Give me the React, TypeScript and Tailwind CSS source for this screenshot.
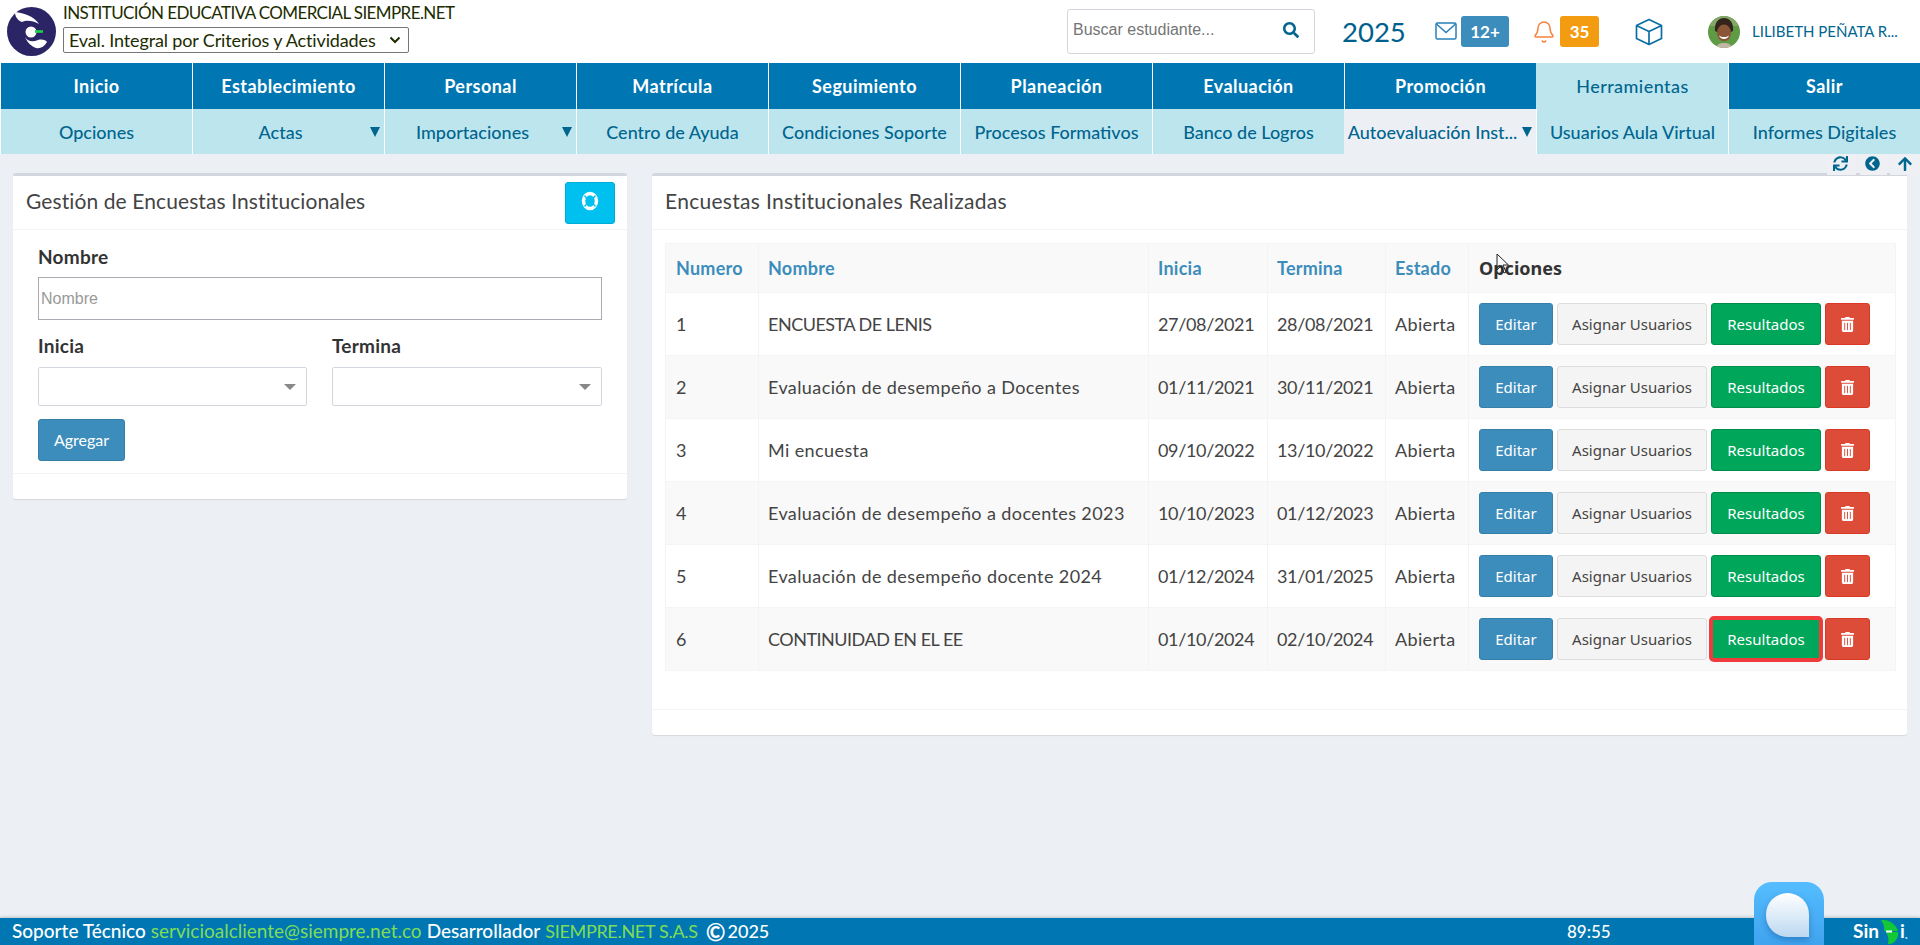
import { FaTrashAlt, FaSearch, FaSync, FaChevronCircleLeft, FaArrowUp } from 'react-icons/fa'
import { Bell } from 'lucide-react'

const topMenu = ['Inicio', 'Establecimiento', 'Personal', 'Matrícula', 'Seguimiento', 'Planeación', 'Evaluación', 'Promoción', 'Herramientas', 'Salir']
const subMenu = [
  { label: 'Opciones' },
  { label: 'Actas', arrow: true },
  { label: 'Importaciones', arrow: true },
  { label: 'Centro de Ayuda' },
  { label: 'Condiciones Soporte' },
  { label: 'Procesos Formativos' },
  { label: 'Banco de Logros' },
  { label: 'Autoevaluación Inst...', arrow: true, active: true },
  { label: 'Usuarios Aula Virtual' },
  { label: 'Informes Digitales' },
]
const encuestas = [
  { n: 1, nombre: 'ENCUESTA DE LENIS', inicia: '27/08/2021', termina: '28/08/2021', caps: true },
  { n: 2, nombre: 'Evaluación de desempeño a Docentes', inicia: '01/11/2021', termina: '30/11/2021' },
  { n: 3, nombre: 'Mi encuesta', inicia: '09/10/2022', termina: '13/10/2022' },
  { n: 4, nombre: 'Evaluación de desempeño a docentes 2023', inicia: '10/10/2023', termina: '01/12/2023' },
  { n: 5, nombre: 'Evaluación de desempeño docente 2024', inicia: '01/12/2024', termina: '31/01/2025' },
  { n: 6, nombre: 'CONTINUIDAD EN EL EE', inicia: '01/10/2024', termina: '02/10/2024', caps: true },
]

const sans = "font-['Lato','Noto_Sans',sans-serif]"
const arial = "font-['Liberation_Sans',Arial,sans-serif]"
const noto = "font-['Noto_Sans','Open_Sans',sans-serif]"

function Logo() {
  return (
    <svg width="49" height="49" viewBox="0 0 49 49">
      <circle cx="24.5" cy="24.5" r="24.5" fill="#2b2566" />
      <path d="M8 5c9 1 19 4 24 12-7-4-13-4-17-2C10 13 8 9 8 5z" fill="#fff" />
      <path d="M18 30c3 5 8 5 13 3 4-1 8 0 9 2-3 5-7 7-11 6-5-2-9-6-11-11z" fill="#fff" />
      <circle cx="24" cy="25" r="5.500" fill="#fff" />
      <rect x="28" y="23.200" width="8" height="2.600" fill="#19d44a" />
    </svg>
  )
}

function Avatar() {
  return (
    <svg width="32" height="32" viewBox="0 0 32 32" className="rounded-full">
      <rect width="32" height="32" fill="#5f9a45" />
      <rect width="32" height="10" fill="#83a868" />
      <path d="M7 15C6 6 11 2 16 2s10 4 9 13l-2 1H9z" fill="#33241c" />
      <ellipse cx="16" cy="17" rx="7" ry="8.500" fill="#8a5638" />
      <path d="M11 19.500c3 2 7 2 10 0-1 4.500-9 4.500-10 0z" fill="#fff" />
      <path d="M8 32c1-4 4-5 8-5s7 1 8 5z" fill="#c4b6a5" />
    </svg>
  )
}

function LifeRing() {
  return (
    <svg width="18" height="20" viewBox="0 0 18 20">
      <ellipse cx="9" cy="10" rx="6.500" ry="7.500" fill="none" stroke="#fff" strokeWidth="3.500" />
      <path d="M3.500 4.500 6 7.500M14.500 4.500 12 7.500M3.500 15.500 6 12.500M14.500 15.500 12 12.500" stroke="#00c0ef" strokeWidth="1.300" />
    </svg>
  )
}

function Card({ title, action, className, children, titleClass }: { title: string; action?: React.ReactNode; className: string; children: React.ReactNode; titleClass?: string }) {
  return (
    <div className={`bg-white rounded-[3px] border-t-[3px] border-[#d2d6de] shadow-[0_1px_1px_rgba(0,0,0,0.1)] ${className}`}>
      <div className="h-[54px] flex items-center justify-between pl-[13px] pr-[12px] border-b border-[#f4f4f4]">
        <h3 className={`text-[21px] text-[#444] -mt-[3px] ${sans} ${titleClass || ''}`}>{title}</h3>
        {action}
      </div>
      {children}
    </div>
  )
}

function Select({ className }: { className: string }) {
  return (
    <div className={`h-[39px] border border-[#d2d6de] rounded-[2px] bg-white flex items-center justify-end pr-[10px] ${className}`}>
      <div className="w-0 h-0 border-x-[6px] border-x-transparent border-t-[6px] border-t-[#888]" />
    </div>
  )
}

const labelCls = 'h-[24px] text-[19px] leading-[24px] font-bold text-[#333] tracking-[0.25px]'

export default function App() {
  return (
    <div className={`h-[945px] w-[1920px] overflow-hidden bg-[#ecf0f5] flex flex-col relative ${sans}`}>
      {/* Header */}
      <header className="h-[63px] bg-white flex items-center shrink-0">
        <div className="ml-[7px] mr-[7px]"><Logo /></div>
        <div className="flex flex-col self-start pt-[1px]">
          <div className="text-[17px] leading-[24px] text-[#1c2c00] tracking-[-0.6px] whitespace-nowrap">INSTITUCIÓN EDUCATIVA COMERCIAL SIEMPRE.NET</div>
          <div className="mt-[2px] w-[346px] h-[26px] border border-[#767676] rounded-[2px] flex items-center justify-between pl-[5px] pr-[7px] text-[18px] tracking-[-0.14px] text-[#1c2c00]">
            <span>Eval. Integral por Criterios y Actividades</span>
            <svg width="12" height="8" viewBox="0 0 12 8"><path d="M1.500 1.500 6 6l4.500-4.500" fill="none" stroke="#1c2c00" strokeWidth="2" /></svg>
          </div>
        </div>
        <div className="ml-auto flex items-center">
          <div className="w-[248px] h-[45px] border border-[#d2d6de] rounded-[3px] flex items-center justify-between pl-[5px] pr-[15px]">
            <span className={`text-[16px] text-[#757575] -mt-[3px] ${arial}`}>Buscar estudiante...</span>
            <FaSearch size={16} className="text-[#00658f] -mt-[3px]" />
          </div>
          <div className="ml-[27px] w-[62px] text-[27.5px] text-[#00608c] leading-none">2025</div>
          <svg width="22" height="18" viewBox="0 0 22 18" className="ml-[31px] -mt-[1px] text-[#2a80b9]">
            <rect x="1" y="1" width="20" height="16" rx="1.500" fill="none" stroke="currentColor" strokeWidth="1.500" />
            <path d="M1.500 2 11 10.500 20.500 2" fill="none" stroke="currentColor" strokeWidth="1.500" />
          </svg>
          <div className="ml-[4px] w-[48px] h-[31px] rounded-[3px] bg-[#3c8dbc] text-white text-[17px] font-bold flex items-center justify-center">12+</div>
          <Bell size={24} strokeWidth={1.5} className="ml-[23px] text-[#f5833c]" />
          <div className="ml-[4px] w-[39px] h-[31px] rounded-[3px] bg-[#f39c12] text-white text-[17px] font-bold flex items-center justify-center">35</div>
          <svg width="28" height="28" viewBox="0 0 28 28" className="ml-[36px] text-[#0b6ea3]">
            <path d="M14 1.500 26.500 7.500v13L14 26.500 1.500 20.500v-13zM1.500 7.500 14 13.500l12.500-6M14 13.500v13" fill="none" stroke="currentColor" strokeWidth="1.700" strokeLinejoin="round" />
          </svg>
          <div className="ml-[45px]"><Avatar /></div>
          <div className="ml-[12px] mr-[23px] w-[145px] text-[15px] text-[#00658f] whitespace-nowrap">LILIBETH PEÑATA R...</div>
        </div>
      </header>

      {/* Menu */}
      <nav className="grid grid-cols-10 h-[46px] shrink-0">
        {topMenu.map((m) => {
          const on = m === 'Herramientas'
          return (
            <div key={m} className={`flex items-center justify-center text-[18px] tracking-[0.45px] border-l border-white ${on ? 'bg-[#bde5ee] text-[#00658f] font-medium border-l-[#bde5ee]' : 'bg-[#0077b3] text-white font-bold'}`}>{m}</div>
          )
        })}
      </nav>
      <nav className="grid grid-cols-10 h-[45px] shrink-0">
        {subMenu.map((m) => (
          <div key={m.label} className={`relative flex items-center justify-center pt-[1px] text-[18px] text-[#00658f] font-medium whitespace-nowrap border-l border-white ${m.active ? 'bg-[#ecf0f5] border-l-[#ecf0f5]' : 'bg-[#bde5ee]'} ${m.arrow ? 'pr-[16px]' : ''}`}>
            {m.label}
            {m.arrow && <span className="absolute right-[4px] top-[18px] w-0 h-0 border-x-[5px] border-x-transparent border-t-[10px] border-t-[#00658f]" />}
          </div>
        ))}
      </nav>

      {/* Toolbar */}
      <div className="h-[19px] flex justify-end gap-[3px] shrink-0 relative z-10">
        <button className="w-[29px] h-[21px] mr-[1px] pr-[3px] pb-[2px] bg-[#eef0f4] flex items-center justify-center text-[#00658f]"><FaSync size={15} /></button>
        <button className="w-[27px] h-[21px] pr-[2px] pb-[2px] bg-[#eef0f4] flex items-center justify-center text-[#00658f]"><FaChevronCircleLeft size={15} /></button>
        <button className="w-[30px] h-[21px] pb-[2px] bg-[#eef0f4] flex items-center justify-center text-[#00658f]"><FaArrowUp size={16} /></button>
      </div>

      {/* Content */}
      <main className="flex items-start gap-[25px] pl-[13px]">
        <Card
          title="Gestión de Encuestas Institucionales"
          titleClass="tracking-[0.1px]"
          className="w-[614px] h-[326px] flex flex-col"
          action={<button className="w-[50px] h-[42px] bg-[#00c0ef] rounded-[3px] border border-[#00acd6] flex items-center justify-center pb-[3px]"><LifeRing /></button>}
        >
          <div className="px-[25px] flex-1">
            <label className={`block mt-[15px] ${labelCls}`}>Nombre</label>
            <div className={`mt-[8px] h-[43px] border border-[#aaaab2] flex items-center pl-[2px] text-[16px] text-[#999] ${arial}`}>Nombre</div>
            <div className="mt-[14px] grid grid-cols-[269px_270px] gap-x-[25px]">
              <label className={labelCls}>Inicia</label>
              <label className={labelCls}>Termina</label>
              <Select className="mt-[9px]" />
              <Select className="mt-[9px]" />
            </div>
            <button className="mt-[13px] w-[87px] h-[42px] bg-[#3c8dbc] border border-[#367fa9] rounded-[3px] text-white text-[16px]">Agregar</button>
          </div>
          <div className="h-[26px] border-t border-[#f4f4f4]" />
        </Card>

        <Card title="Encuestas Institucionales Realizadas" titleClass="tracking-[0.3px]" className="w-[1255px] h-[562px] flex flex-col">
          <div className="pl-[13px] pr-[12px] pt-[13px] flex-1">
            <table className="w-[1230px] table-fixed border-collapse text-[18px] text-[#444]">
              <colgroup>
                <col className="w-[93px]" />
                <col className="w-[390px]" />
                <col className="w-[119px]" />
                <col className="w-[118px]" />
                <col className="w-[83px]" />
                <col className="w-[427px]" />
              </colgroup>
              <thead>
                <tr className="h-[49px] bg-[#f9f9f9] text-left text-[#3c8dbc] tracking-[0.25px]">
                  <th className="pl-[10px] font-bold border border-[#f4f4f4]">Numero</th>
                  <th className="pl-[9px] font-bold border border-[#f4f4f4]">Nombre</th>
                  <th className="pl-[9px] font-bold border border-[#f4f4f4]">Inicia</th>
                  <th className="pl-[9px] font-bold border border-[#f4f4f4]">Termina</th>
                  <th className="pl-[9px] font-bold border border-[#f4f4f4]">Estado</th>
                  <th className={`pl-[10px] border border-[#f4f4f4] text-[#333] text-[18px] tracking-normal font-bold ${noto}`}>Opciones</th>
                </tr>
              </thead>
              <tbody>
                {encuestas.map((e, i) => (
                  <tr key={e.n} className={`h-[63px] ${i % 2 ? 'bg-[#f9f9f9]' : 'bg-white'}`}>
                    <td className="pl-[10px] border border-[#f4f4f4]">{e.n}</td>
                    <td className={`pl-[9px] border border-[#f4f4f4] ${e.caps ? 'tracking-[-0.5px]' : 'tracking-[0.4px]'}`}>{e.nombre}</td>
                    <td className="pl-[9px] border border-[#f4f4f4] tracking-[-0.35px]">{e.inicia}</td>
                    <td className="pl-[9px] border border-[#f4f4f4] tracking-[-0.35px]">{e.termina}</td>
                    <td className="pl-[9px] border border-[#f4f4f4] tracking-[0.35px]">Abierta</td>
                    <td className="pl-[10px] border border-[#f4f4f4]">
                      <div className={`flex gap-[4px] text-[15px] ${noto}`}>
                        <button className="w-[74px] h-[42px] bg-[#3c8dbc] border border-[#367fa9] rounded-[3px] text-white">Editar</button>
                        <button className="w-[150px] h-[42px] bg-[#f4f4f4] border border-[#ddd] rounded-[3px] text-[#444]">Asignar Usuarios</button>
                        <button className={`w-[110px] h-[42px] bg-[#00a65a] rounded-[3px] text-white border border-[#008d4c] ${e.n === 6 ? 'outline-[4px] outline-[#ef3b3b] -outline-offset-[2px]' : ''}`}>Resultados</button>
                        <button className="w-[45px] h-[42px] bg-[#dd4b39] border border-[#d73925] rounded-[3px] text-white flex items-center justify-center"><FaTrashAlt size={15} /></button>
                      </div>
                    </td>
                  </tr>
                ))}
              </tbody>
            </table>
          </div>
          <div className="h-[26px] border-t border-[#f4f4f4]" />
        </Card>
      </main>

      {/* Footer */}
      <footer className="mt-auto h-[27px] bg-[#0077b3] shadow-[0_-1px_3px_rgba(0,0,0,0.2)] flex items-center pl-[12px] text-[19px] font-medium text-white relative whitespace-nowrap">
        <span>Soporte Técnico</span>
        <span className="ml-[5px] text-[#7fdc56] font-normal">servicioalcliente@siempre.net.co</span>
        <span className="ml-[5px]">Desarrollador</span>
        <span className="ml-[5px] text-[#7fdc56] font-normal text-[18px] tracking-[-0.3px]">SIEMPRE.NET S.A.S</span>
        <span className="ml-[8px] text-[24px] leading-none font-bold">©</span>
        <span className="ml-[2px] text-[18px]">2025</span>
        <span className="absolute left-[1567px] top-[1px] text-[17px] font-medium">89:55</span>
        <span className="absolute left-[1853px] top-[-1px] text-[19px] font-bold flex items-center">Sin
          <svg width="19" height="24" viewBox="0 0 19 24" className="mx-[1px] mt-[1px]">
            <path d="M1 0C8-1 16 4 18 11H4C5 7 3 3 1 0z" fill="#12c935" />
            <path d="M8 24C14 25 19 18 18 12H6C8 15 9 19 8 24z" fill="#12c935" />
            <rect x="6" y="10.500" width="6" height="2" fill="#fff" />
          </svg>
          i<span className="text-[13px] mt-[6px] text-[#bcd8e8]">.</span></span>
      </footer>

      {/* Chat widget */}
      <div className="absolute left-[1754px] top-[882px] w-[70px] h-[80px] rounded-[18px] bg-gradient-to-b from-[#55bdff] to-[#3a9cea] pl-[12px] pt-[11px]">
        <div className="w-[43px] h-[44px] rounded-t-full rounded-bl-full bg-gradient-to-b from-white to-[#bcd8f0] shadow-[0_3px_6px_rgba(0,60,130,0.35)]" />
      </div>

      {/* Mouse cursor */}
      <svg width="14" height="22" viewBox="0 0 14 22" className="absolute left-[1496px] top-[253px]">
        <path d="M1 1v16l4-4 3 7 2-1-3-7h5.500z" fill="none" stroke="#222" strokeWidth="1" />
      </svg>
    </div>
  )
}
